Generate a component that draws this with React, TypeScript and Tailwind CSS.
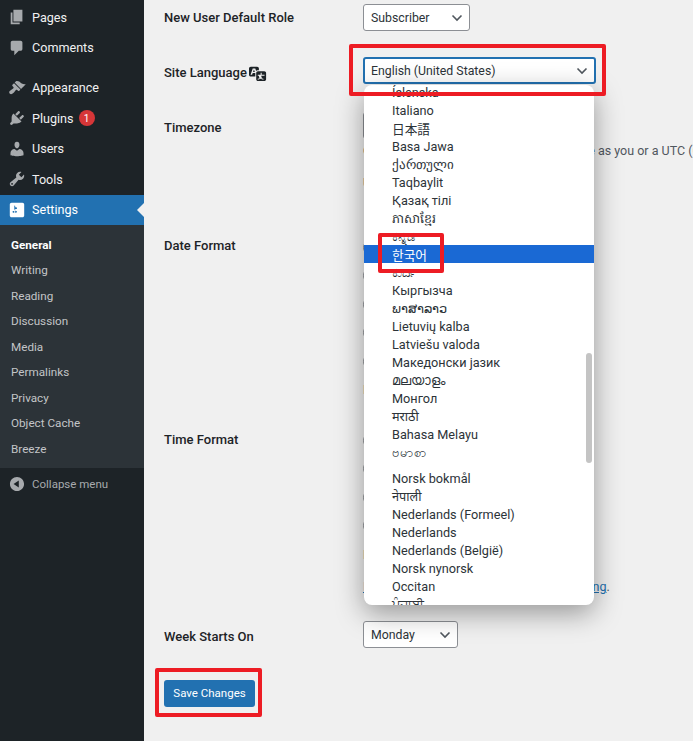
import React from "react";

const font = "font-['Roboto','Noto_Sans','Noto_Sans_CJK_KR',sans-serif]";

const P = {
  pages: "M6 15V2h10v13H6zm-1 1h8v2H3V5h2v11z",
  comments: "M5 2h9c1.1 0 2 .9 2 2v7c0 1.1-.9 2-2 2h-2l-5 5v-5H5c-1.1 0-2-.9-2-2V4c0-1.1.9-2 2-2z",
  appearance: "M14.48 11.06L7.41 3.99l1.5-1.5c.5-.56 2.3-.47 3.51.32 1.21.8 1.43 1.28 2.91 2.1 1.18.64 2.45 1.26 4.45.85zm-.71.71L6.7 4.7 4.93 6.47c-.39.39-.39 1.02 0 1.41l1.06 1.06c.39.39.39 1.03 0 1.42-.6.6-1.43 1.11-2.21 1.69-.35.26-.7.53-1.01.84C1.43 13.23.76 14.91 1.82 16l.3.3c1.06 1.05 2.74.38 4.08-.96.31-.31.58-.67.84-1.02.58-.78 1.09-1.61 1.69-2.21.39-.39 1.02-.39 1.41 0l1.06 1.06c.39.39 1.02.39 1.41 0z",
  plugins: "M13.11 4.36L9.87 7.6 8 5.73l3.24-3.24c.35-.34 1.05-.2 1.56.32.52.51.66 1.21.31 1.55zm-8 1.77l.91-1.12 9.01 9.01-1.19.84c-.71.71-2.63 1.16-3.82 1.16H6.14L4.9 17.26c-.59.59-1.54.59-2.12 0-.59-.58-.59-1.53 0-2.12l1.24-1.24v-3.88c0-1.13.4-3.19 1.09-3.89zm7.26 3.97l3.24-3.24c.34-.35 1.04-.21 1.55.31.52.51.66 1.21.31 1.55l-3.24 3.25z",
  users: "M10 9.25c-2.27 0-2.73-3.44-2.73-3.44C7 4.02 7.82 2 9.97 2c2.16 0 2.98 2.02 2.71 3.81 0 0-.41 3.44-2.68 3.44zm0 2.57L12.72 10c2.39 0 4.52 2.33 4.52 4.53v2.49s-3.65 1.13-7.24 1.13c-3.65 0-7.24-1.13-7.24-1.13v-2.49c0-2.25 1.94-4.48 4.47-4.48z",
  tools: "M16.68 9.77c-1.34 1.34-3.3 1.67-4.95.99l-5.41 6.52c-.99.99-2.59.99-3.58 0s-.99-2.59 0-3.57l6.52-5.42c-.68-1.65-.35-3.61.99-4.95 1.28-1.28 3.12-1.62 4.72-1.06l-2.89 2.89 2.82 2.82 2.86-2.87c.53 1.58.18 3.39-1.08 4.65zM3.81 16.21c.4.39 1.04.39 1.43 0 .4-.4.4-1.04 0-1.43-.39-.4-1.03-.4-1.43 0-.39.39-.39 1.03 0 1.43z",
  settings: "M18 16V4c0-1.1-.9-2-2-2H4c-1.1 0-2 .9-2 2v12c0 1.1.9 2 2 2h12c1.1 0 2-.9 2-2zM8 11h1c.55 0 1 .45 1 1s-.45 1-1 1H8v1.5c0 .28-.22.5-.5.5s-.5-.22-.5-.5V13H6c-.55 0-1-.45-1-1s.45-1 1-1h1V5.5c0-.28.22-.5.5-.5s.5.22.5.5V7h1c.55 0 1 .45 1 1s-.45 1-1 1h-1v5.5c0 .28-.22.5-.5.5s-.5-.22-.5-.5V9z",
  collapse: "M10 2.16c4.33 0 7.84 3.51 7.84 7.84s-3.51 7.84-7.84 7.84S2.16 14.33 2.16 10 5.71 2.16 10 2.16zm2 11.72V6.12L6.18 9.97z",
  translation: "M11 7H9.49c-.63 0-1.25.3-1.59.7L7 5H4.13l-2.39 7h1.69l.74-2H7v4H2c-1.1 0-2-.9-2-2V5c0-1.1.9-2 2-2h7c1.1 0 2 .9 2 2v2zM6.51 9H4.49l1-2.93zM10 8h7c1.1 0 2 .9 2 2v7c0 1.1-.9 2-2 2h-7c-1.1 0-2-.9-2-2v-7c0-1.1.9-2 2-2zm7.25 5v-1.08h-3.17V9.75h-1.16v2.17H9.75V13h1.15c.01 1.15.44 2.08 1.07 2.75-.61.36-1.38.55-2.22.58v1.06c1.16-.07 2.21-.36 3.1-.93.89.57 1.95.86 3.15.93v-1.06c-.86-.03-1.63-.22-2.24-.58.62-.67 1.05-1.6 1.06-2.75zm-2.02 0c-.05.85-.35 1.53-.85 1.99-.5-.46-.8-1.14-.85-1.99z",
};

function Icon({ d, className }: { d: string; className: string }) {
  return (
    <svg viewBox="0 0 20 20" className={className} fill="currentColor">
      <path d={d} />
    </svg>
  );
}

function Chevron() {
  return (
    <svg viewBox="0 0 12 8" className="h-[8px] w-[12px] shrink-0" fill="none" stroke="#50575e" strokeWidth="1.6">
      <path d="M1.5 1.5 6 6l4.5-4.5" />
    </svg>
  );
}

function MenuItem({ d, label, badge, active }: { d: string; label: string; badge?: boolean; active?: boolean }) {
  return (
    <div className={`relative flex h-[30.5px] items-center pl-[8px] text-[12.6px] ${active ? "bg-[#2271b1] text-white" : "text-[#f0f0f1]"}`}>
      <Icon d={d} className={`h-[18px] w-[18px] shrink-0 ${active ? "text-white" : "text-[#a7aaad]"}`} />
      <span className="ml-[6px] pt-[2px]">{label}</span>
      {badge && (
        <span className="ml-[5px] flex h-[16px] w-[16px] items-center justify-center rounded-full bg-[#d63638] text-[10px] text-white">1</span>
      )}
      {active && (
        <span className="absolute right-0 top-[8px] h-0 w-0 border-y-[7px] border-r-[7px] border-y-transparent border-r-[#f0f0f0]" />
      )}
    </div>
  );
}

function Select({ label, className }: { label: string; className: string }) {
  return (
    <div className={`flex h-[27px] items-center justify-between rounded-[3px] border border-[#8c8f94] bg-white pl-[7px] pr-[6px] text-[12.3px] text-[#2c3338] ${className}`}>
      <span className="pt-[2px]">{label}</span>
      <Chevron />
    </div>
  );
}

function Radio() {
  return <span className="block h-[15px] w-[15px] shrink-0 rounded-full border border-[#8c8f94] bg-white" />;
}

const langs: [string, string?][] = [
  ["Íslenska"], ["Italiano"], ["日本語", "font-['Noto_Sans_CJK_JP']"], ["Basa Jawa"], ["ქართული"], ["Taqbaylit"], ["Қазақ тілі"],
  ["ភាសាខ្មែរ"], ["ಕನ್ನಡ"], ["한국어", "bg-[#1a69d4] text-white font-['Noto_Sans_CJK_KR']"], ["ಕುರ್ದಿ"], ["Кыргызча"], ["ພາສາລາວ"],
  ["Lietuvių kalba"], ["Latviešu valoda"], ["Македонски јазик"], ["മലയാളം"], ["Монгол"], ["मराठी"], ["Bahasa Melayu"],
  ["ဗမာစာ", "h-[26px] pb-[8px]"], ["Norsk bokmål"], ["नेपाली"], ["Nederlands (Formeel)"], ["Nederlands"], ["Nederlands (België)"],
  ["Norsk nynorsk"], ["Occitan"], ["ਪੰਜਾਬੀ"],
];

function Row({ label, height, children }: { label: React.ReactNode; height: string; children: React.ReactNode }) {
  return (
    <div className={`flex ${height}`}>
      <div className="w-[199px] shrink-0 pt-[1px] text-[13px] leading-[18px] font-medium text-[#1d2327]">{label}</div>
      <div className="min-w-0 flex-1">{children}</div>
    </div>
  );
}

export default function App() {
  return (
    <div className={`flex h-[741px] w-[693px] overflow-hidden bg-[#f0f0f0] ${font}`}>
      <aside className="flex w-[144px] shrink-0 flex-col bg-[#1d2327] pt-[2px]">
        <MenuItem d={P.pages} label="Pages" />
        <MenuItem d={P.comments} label="Comments" />
        <div className="h-[9.5px]" />
        <MenuItem d={P.appearance} label="Appearance" />
        <MenuItem d={P.plugins} label="Plugins" badge />
        <MenuItem d={P.users} label="Users" />
        <MenuItem d={P.tools} label="Tools" />
        <MenuItem d={P.settings} label="Settings" active />
        <div className="flex flex-col bg-[#2c3338] pt-[8px] pb-[5.5px] text-[11.7px] text-[#c3c5c7]">
          {["General", "Writing", "Reading", "Discussion", "Media", "Permalinks", "Privacy", "Object Cache", "Breeze"].map((s) => (
            <div key={s} className={`flex h-[25.5px] items-center pl-[11px] ${s === "General" ? "font-bold text-white" : ""}`}>{s}</div>
          ))}
        </div>
        <div className="flex h-[32px] items-center pl-[8px] text-[11.5px] text-[#a7aaad]">
          <Icon d={P.collapse} className="h-[18px] w-[18px] shrink-0" />
          <span className="ml-[6px] pt-[1px]">Collapse menu</span>
        </div>
      </aside>

      <main className="min-w-0 flex-1 pl-[20px] pt-[8px]">
        <Row label="New User Default Role" height="h-[55px]">
          <Select label="Subscriber" className="-mt-[4px] w-[107px]" />
        </Row>
        <Row
          label={
            <span className="flex items-center gap-[2px]">
              Site Language
              <Icon d={P.translation} className="h-[18px] w-[18px] text-[#1d2327]" />
            </span>
          }
          height="h-[55px]"
        >
          <div className="relative -mt-[6px]">
            <div className="pointer-events-none absolute -left-[14px] -top-[13px] z-20 h-[52px] w-[257px] rounded-[2px] border-[4px] border-[#ed1c24]" />
            <Select label="English (United States)" className="relative w-[233px] border-2 border-[#2271b1] pl-[6px]!" />
            <div className="absolute left-[1px] top-[28px] z-10 h-[520px] w-[230px] overflow-hidden rounded-[8px] bg-white text-[12.7px] text-[#2c3338] shadow-[0_8px_28px_rgba(0,0,0,0.38)]">
              <div className="-mt-[2px]">
                {langs.map(([t, c]) => (
                  <div key={t} className={`flex h-[18px] items-center pl-[28px] pt-[1px] leading-[18px] whitespace-nowrap ${c ?? ""}`}>{t}</div>
                ))}
              </div>
              <div className="absolute right-[2px] top-[268px] h-[110px] w-[6px] rounded-[3px] bg-[#c4c4c4]" />
            </div>
            <div className="pointer-events-none absolute left-[15px] top-[176px] z-20 h-[40px] w-[66px] rounded-[2px] border-[4px] border-[#ed1c24]" />
          </div>
        </Row>
        <Row label="Timezone" height="h-[118px]">
          <Select label="UTC+0" className="-mt-[6px] w-[120px]" />
          <p className="mt-[3px] whitespace-nowrap text-[12.5px] leading-[18px] text-[#50575e]">Choose either a city in the same timezone as you or a UTC (Coordinated Universal Time) time offset.</p>
          <p className="mt-[14px] whitespace-nowrap text-[12.5px] leading-[18px] text-[#50575e]">Universal time is 2024-05-21 08:14:32.</p>
        </Row>
        <Row label="Date Format" height="h-[194px]">
          <div className="flex flex-col gap-[13.5px] pt-[3.5px]">
            <Radio /><Radio /><Radio /><Radio /><Radio />
          </div>
          <p className="mt-[12.5px] whitespace-nowrap text-[12.5px] leading-[18px] text-[#50575e]">Preview: May 21, 2024</p>
        </Row>
        <Row label="Time Format" height="h-[197px]">
          <div className="flex flex-col gap-[13.5px] pt-[2.5px]">
            <Radio /><Radio /><Radio /><Radio />
          </div>
          <p className="mt-[13px] whitespace-nowrap text-[12.5px] leading-[18px] text-[#50575e]">Preview: 8:14 am</p>
          <p className="mt-[14px] whitespace-nowrap text-[12.5px] leading-[18px] text-[#50575e]">
            <span className="text-[#2271b1] underline">Documentation on date and time formatting</span>.
          </p>
        </Row>
        <Row label="Week Starts On" height="h-[53px]">
          <Select label="Monday" className="-mt-[6px] w-[95px]" />
        </Row>
        <div className="relative inline-block">
          <div className="pointer-events-none absolute -left-[9px] -top-[12px] h-[49px] w-[107px] rounded-[2px] border-[4px] border-[#ed1c24]" />
          <button className="flex h-[27px] w-[91px] items-center justify-center rounded-[3px] bg-[#2271b1] pt-[1px] text-[11.5px] text-white">Save Changes</button>
        </div>
      </main>
    </div>
  );
}
